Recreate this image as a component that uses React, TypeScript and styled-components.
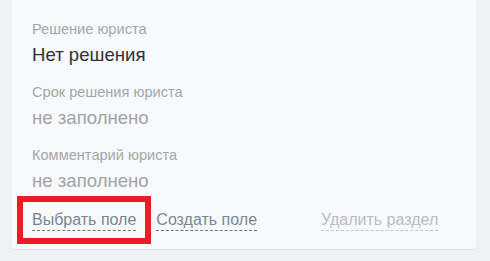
import styled, { createGlobalStyle } from "styled-components"

const GlobalStyle = createGlobalStyle`
    html, body {
        margin: 0;
        padding: 0;
        background: #eef1f4;
        font-family: "Liberation Sans", Arial, sans-serif;
    }
`

const fields = [
    { label: "Решение юриста", value: "Нет решения", empty: false },
    { label: "Срок решения юриста", value: "не заполнено", empty: true },
    { label: "Комментарий юриста", value: "не заполнено", empty: true },
]

export default function App() {
    return <Page>
        <GlobalStyle />
        <Card>
            {fields.map(f => (
                <Field key={f.label}>
                    <Label>{f.label}</Label>
                    <Value empty={f.empty}>{f.value}</Value>
                </Field>
            ))}
            <Actions>
                <ActionLink>
                    Выбрать поле
                    <Highlight />
                </ActionLink>
                <ActionLink>Создать поле</ActionLink>
                <ActionLink muted>Удалить раздел</ActionLink>
            </Actions>
        </Card>
    </Page>
}

const Page = styled.div`
    width: 490px;
    height: 261px;
    padding: 0 14px 0 12px;
    box-sizing: border-box;
    overflow: hidden;
`

const Card = styled.div`
    height: 249px;
    box-sizing: border-box;
    padding: 20px 20px 0;

    background: #f8f9fb;
    border-radius: 0 0 3px 3px;
    box-shadow: 0 1px 1px rgba(0, 0, 0, 0.07);

    display: flex;
    flex-direction: column;
    gap: 16px;
`

const Field = styled.div`
    display: flex;
    flex-direction: column;
    gap: 5px;
`

const Label = styled.div`
    color: #a3a6aa;
    font-size: 14.6px;
    line-height: 18px;
`

type ValueProps = {
    empty?: boolean,
}

const Value = styled.div<ValueProps>`
    color: ${props => props.empty ? '#a1a3a6' : '#2f3237'};
    font-size: 18.6px;
    line-height: 24px;
`

const Actions = styled.div`
    display: flex;
    align-items: baseline;
    gap: 20px;
    margin-top: 1px;
`

type ActionLinkProps = {
    muted?: boolean,
}

const ActionLink = styled.span<ActionLinkProps>`
    position: relative;
    color: ${props => props.muted ? '#b9bcc0' : '#7a8595'};
    font-size: 16px;
    line-height: 20px;
    border-bottom: 1px dashed ${props => props.muted ? '#c4c6c9' : '#6f747b'};
    cursor: pointer;

    &:last-child {
        margin-left: 44px;
    }
`

const Highlight = styled.span`
    position: absolute;
    left: -15px;
    right: -15px;
    top: -14px;
    bottom: -14px;
    border: 6px solid #ed1c24;
    pointer-events: none;
`
